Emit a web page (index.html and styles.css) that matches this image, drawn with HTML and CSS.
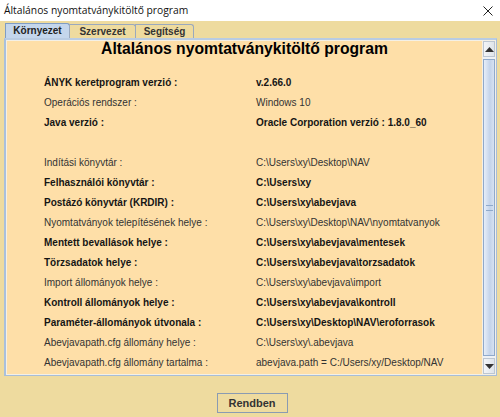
FILE: index.html
```html
<!DOCTYPE html>
<html>
<head>
<meta charset="utf-8">
<link rel="stylesheet" href="styles.css">
</head>
<body>
<div class="window">
  <div class="titlebar">
    <span class="title">Általános nyomtatványkitöltő program</span>
    <svg class="close" width="10" height="10" viewBox="0 0 10 10"><path d="M0.5 0.5 L9.5 9.5 M9.5 0.5 L0.5 9.5" stroke="#222" stroke-width="1"/></svg>
  </div>
  <div class="tabs">
    <div class="tab active t1">Környezet</div>
    <div class="tab t2">Szervezet</div>
    <div class="tab t3">Segítség</div>
  </div>
  <div class="panel">
    <div class="scrollpane">
      <div class="content">
        <h1 class="heading">Általános nyomtatványkitöltő program</h1>
        <div class="rows">
          <div class="label b">ÁNYK keretprogram verzió :</div><div class="value b">v.2.66.0</div>
          <div class="label">Operációs rendszer :</div><div class="value">Windows 10</div>
          <div class="label b">Java verzió :</div><div class="value b">Oracle Corporation verzió : 1.8.0_60</div>
          <div class="label"></div><div class="value"></div>
          <div class="label">Indítási könyvtár :</div><div class="value">C:\Users\xy\Desktop\NAV</div>
          <div class="label b">Felhasználói könyvtár :</div><div class="value b">C:\Users\xy</div>
          <div class="label b">Postázó könyvtár (KRDIR) :</div><div class="value b">C:\Users\xy\abevjava</div>
          <div class="label">Nyomtatványok telepítésének helye :</div><div class="value">C:\Users\xy\Desktop\NAV\nyomtatvanyok</div>
          <div class="label b">Mentett bevallások helye :</div><div class="value b">C:\Users\xy\abevjava\mentesek</div>
          <div class="label b">Törzsadatok helye :</div><div class="value b">C:\Users\xy\abevjava\torzsadatok</div>
          <div class="label">Import állományok helye :</div><div class="value">C:\Users\xy\abevjava\import</div>
          <div class="label b">Kontroll állományok helye :</div><div class="value b">C:\Users\xy\abevjava\kontroll</div>
          <div class="label b">Paraméter-állományok útvonala :</div><div class="value b">C:\Users\xy\Desktop\NAV\eroforrasok</div>
          <div class="label">Abevjavapath.cfg állomány helye :</div><div class="value">C:\Users\xy\.abevjava</div>
          <div class="label">Abevjavapath.cfg állomány tartalma :</div><div class="value">abevjava.path = C:/Users/xy/Desktop/NAV</div>
        </div>
      </div>
      <div class="scrollbar">
        <div class="arrow up"><svg width="9" height="5" viewBox="0 0 9 5"><path d="M0 5 L4.5 0 L9 5 Z" fill="#333"/></svg></div>
        <div class="track">
          <div class="thumb">
            <div class="grip"></div>
          </div>
        </div>
        <div class="arrow down"><svg width="9" height="5" viewBox="0 0 9 5"><path d="M0 0 L4.5 5 L9 0 Z" fill="#333"/></svg></div>
      </div>
    </div>
  </div>
  <div class="footer">
    <button class="btn">Rendben</button>
  </div>
</div>
</body>
</html>
```
FILE: styles.css
```css
html, body {
  margin: 0;
  padding: 0;
}
body {
  width: 500px;
  height: 417px;
  overflow: hidden;
  background: #eedb9f;
  font-family: "Liberation Sans", Arial, sans-serif;
}
.window {
  display: flex;
  flex-direction: column;
  height: 417px;
}
.titlebar {
  height: 21px;
  background: #ffffff;
  display: flex;
  align-items: center;
  justify-content: space-between;
  padding: 0 7px 0 4px;
  font-family: "Open Sans", "Liberation Sans", sans-serif;
  font-size: 10.3px;
  color: #111;
}
.title {
  margin-top: -2px;
}
.close {
  display: block;
}
.tabs {
  height: 17px;
  display: flex;
  align-items: flex-end;
  padding-left: 5px;
}
.tab {
  height: 14px;
  line-height: 13px;
  box-sizing: border-box;
  border: 1px solid #9aa9bd;
  border-bottom: none;
  border-radius: 0 3px 0 0;
  font-size: 10px;
  font-weight: bold;
  color: #333;
  background: #eedb9f;
  text-align: center;
  margin-right: -1px;
}
.t1 { width: 65px; }
.t2 { width: 67px; }
.t3 { width: 59px; }
.tab.active {
  background: #c4d6ec;
  border-color: #7f9dc5;
  height: 15px;
  line-height: 14px;
  color: #222;
}
.panel {
  height: 338px;
  margin: 0 3px 0 4px;
  border: 1px solid #a7bdd8;
  border-top: 2px solid #b9cce3;
  border-left: 2px solid #a9c0dc;
  box-sizing: border-box;
  padding: 1px;
  background: #f4f0e6;
}
.scrollpane {
  display: flex;
  height: 100%;
}
.content {
  flex: 1;
  background: #fedfa8;
  overflow: hidden;
}
.heading {
  margin: 0;
  font-size: 15.7px;
  font-weight: bold;
  text-align: center;
  color: #000;
  line-height: 14px;
  padding-top: 1px;
}
.rows {
  display: grid;
  grid-template-columns: 212px 1fr;
  grid-auto-rows: 20px;
  padding: 17px 0 0 37px;
  font-size: 10px;
  color: #333333;
}
.label, .value {
  line-height: 20px;
  white-space: nowrap;
}
.b {
  font-weight: bold;
  color: #151515;
}
.scrollbar {
  width: 12px;
  margin-left: 1px;
  display: flex;
  flex-direction: column;
  background: #eef1f5;
}
.arrow {
  height: 16px;
  display: flex;
  align-items: center;
  justify-content: center;
  background: linear-gradient(to right, #f3f5f8, #dfe4ea);
  border: 1px solid #bcc6d2;
  box-sizing: border-box;
}
.track {
  flex: 1;
  padding: 2px 0;
  display: flex;
}
.thumb {
  flex: 1;
  box-sizing: border-box;
  border: 1px solid #8fa9cb;
  background: linear-gradient(to right, #e7eef8, #c3d3ea 60%, #d7e2f1);
  display: flex;
  align-items: center;
  justify-content: center;
}
.grip {
  width: 7px;
  height: 4px;
  border-top: 1px solid #8fa9cb;
  border-bottom: 1px solid #8fa9cb;
}
.footer {
  flex: 1;
  display: flex;
  justify-content: center;
  align-items: center;
  padding-top: 12px;
  padding-left: 4px;
}
.btn {
  width: 71px;
  height: 20px;
  box-sizing: border-box;
  border: 1px solid #8a9bb2;
  background: #eedb9f;
  font-family: "Liberation Sans", Arial, sans-serif;
  font-size: 11px;
  font-weight: bold;
  color: #333;
  padding: 0;
  border-radius: 0;
}
```
